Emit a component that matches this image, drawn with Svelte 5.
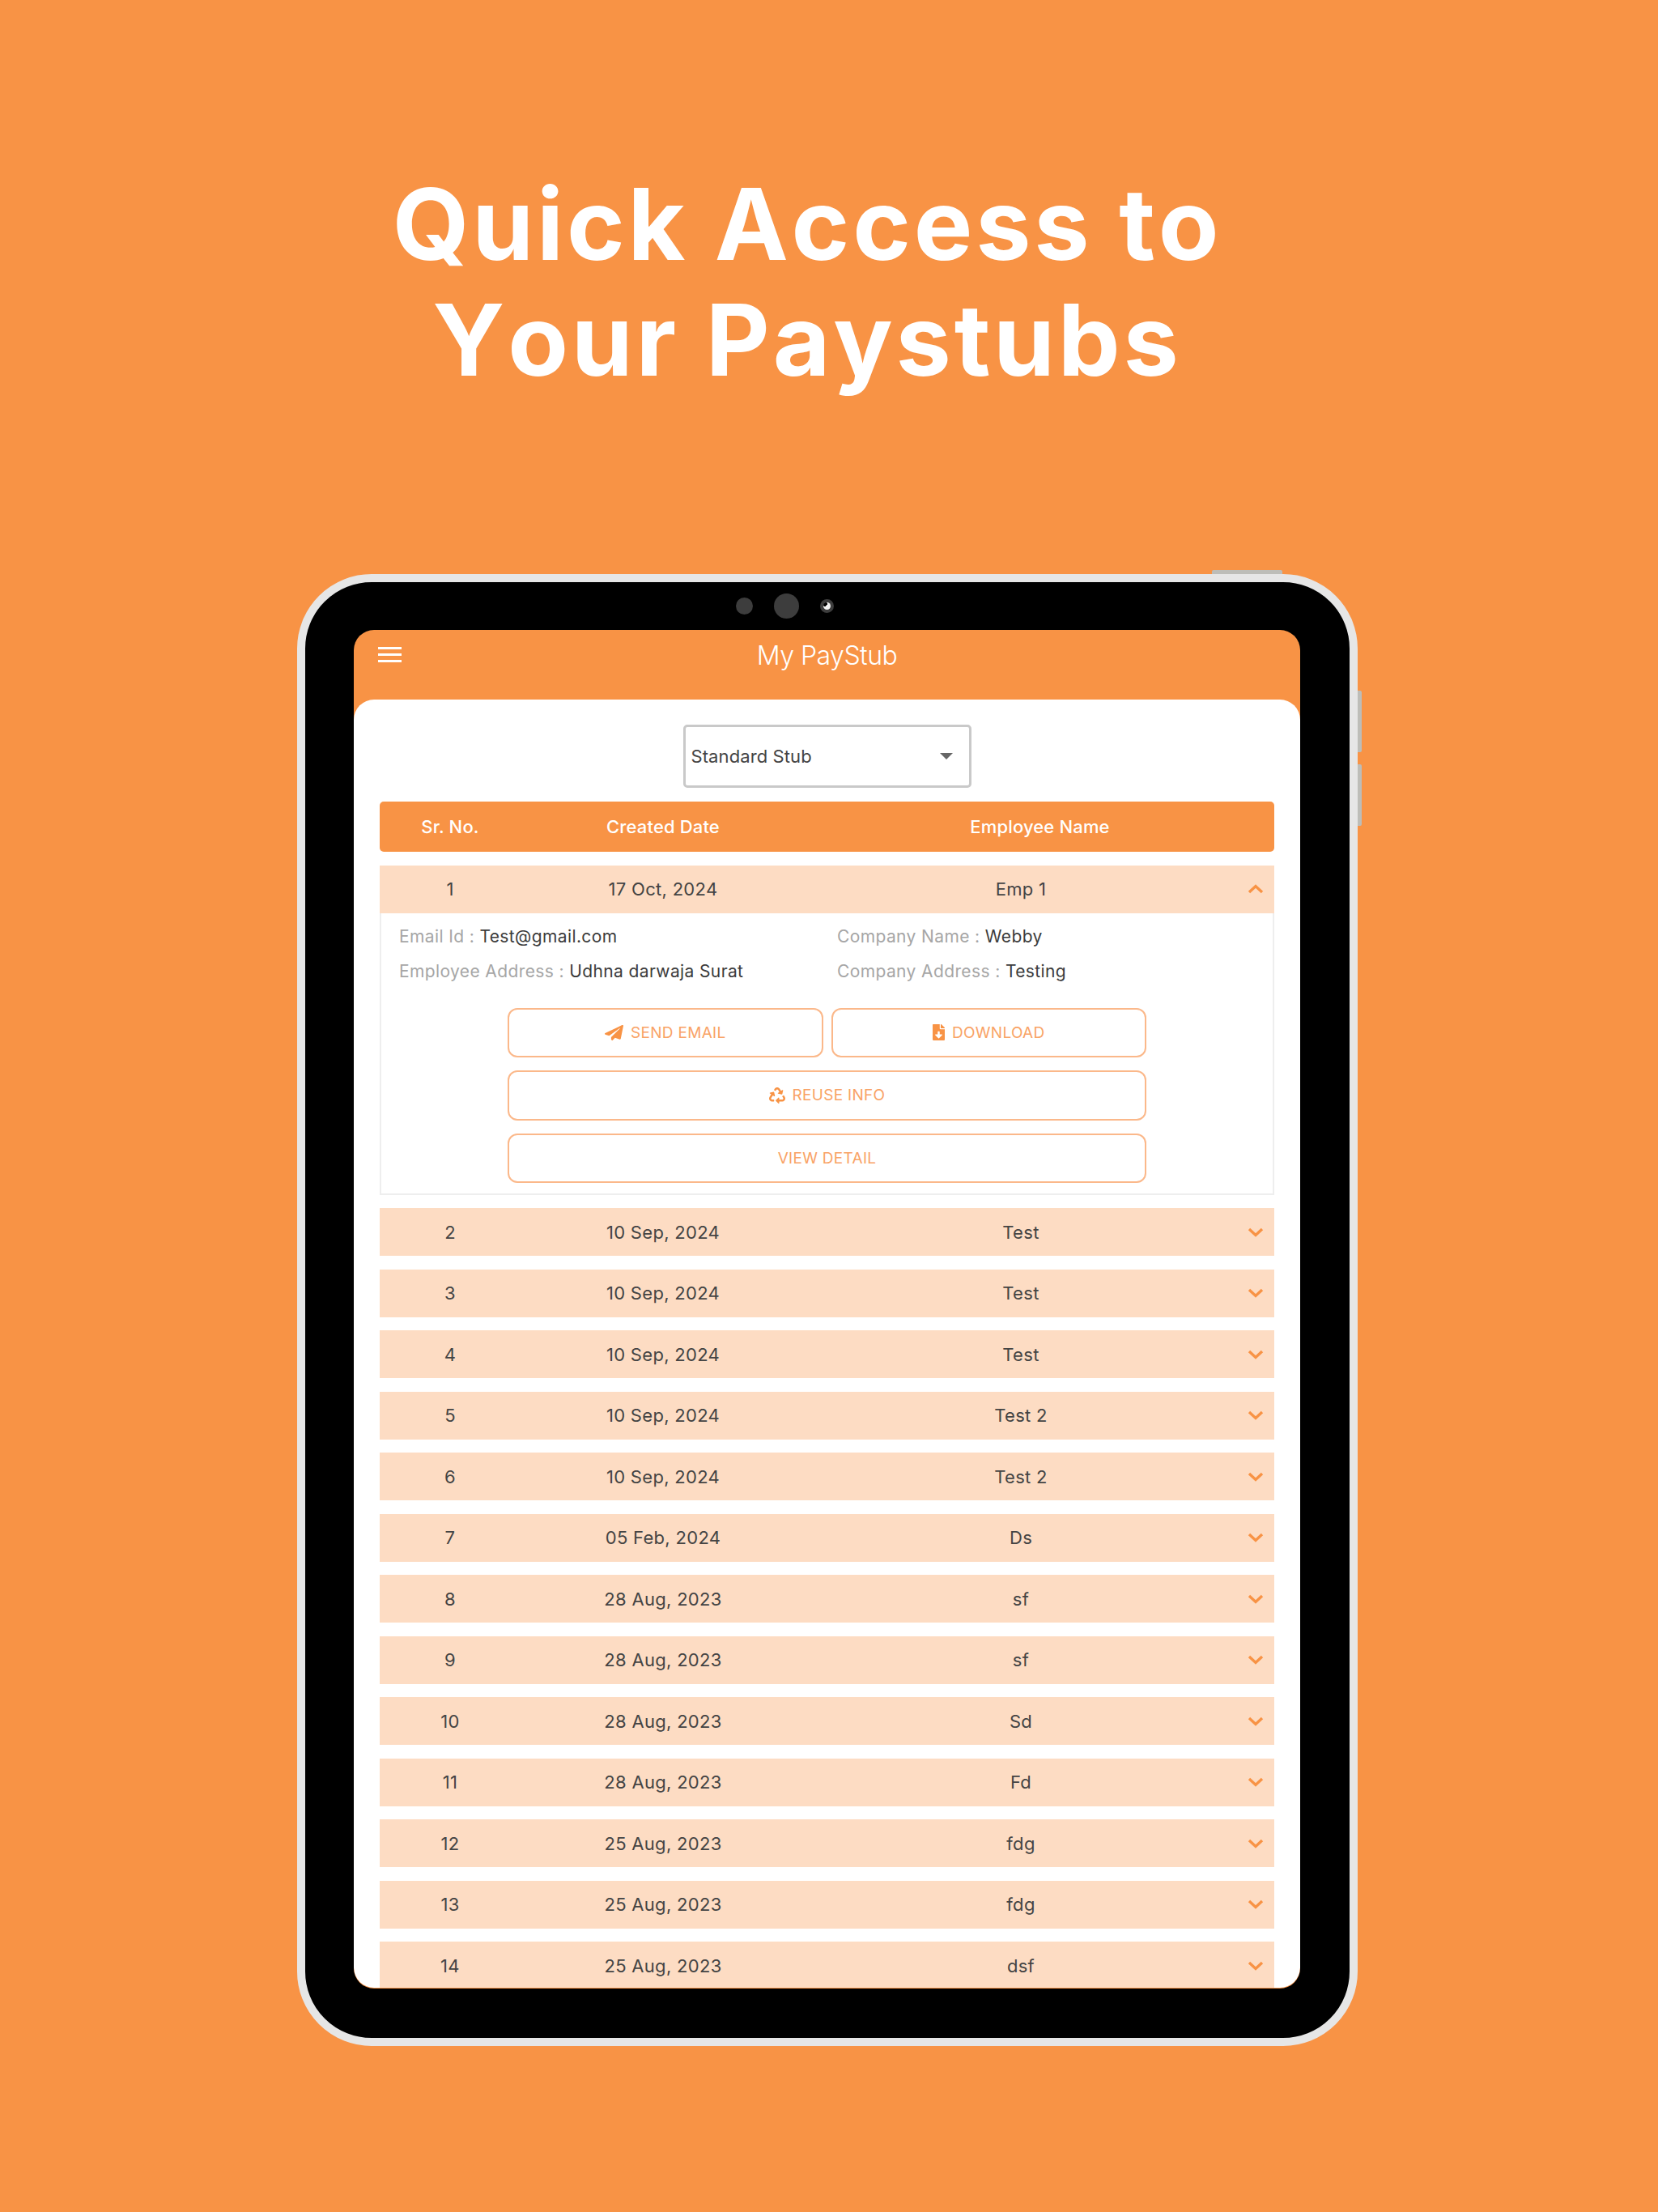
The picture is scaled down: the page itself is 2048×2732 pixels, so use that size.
<script>
	const rows = [
		[2, '10 Sep, 2024', 'Test'],
		[3, '10 Sep, 2024', 'Test'],
		[4, '10 Sep, 2024', 'Test'],
		[5, '10 Sep, 2024', 'Test 2'],
		[6, '10 Sep, 2024', 'Test 2'],
		[7, '05 Feb, 2024', 'Ds'],
		[8, '28 Aug, 2023', 'sf'],
		[9, '28 Aug, 2023', 'sf'],
		[10, '28 Aug, 2023', 'Sd'],
		[11, '28 Aug, 2023', 'Fd'],
		[12, '25 Aug, 2023', 'fdg'],
		[13, '25 Aug, 2023', 'fdg'],
		[14, '25 Aug, 2023', 'dsf']
	];
</script>

<div class="page">
	<h1 class="hero">Quick Access to<br />Your Paystubs</h1>

	<div class="device">
		<span class="btn-top"></span>
		<span class="btn-side one"></span>
		<span class="btn-side two"></span>
		<div class="cams">
			<span class="cam small"></span>
			<span class="cam big"></span>
			<span class="cam lens"><i></i></span>
		</div>

		<div class="screen">
			<header class="appbar">
				<div class="burger"><span></span><span></span><span></span></div>
				<div class="apptitle">My PayStub</div>
			</header>

			<main class="panel">
				<div class="select">
					<span>Standard Stub</span>
					<span class="caret"></span>
				</div>

				<div class="table">
					<div class="head">
						<div>Sr. No.</div>
						<div>Created Date</div>
						<div>Employee Name</div>
					</div>

					<div class="item">
						<div class="row">
							<div>1</div>
							<div>17 Oct, 2024</div>
							<div>Emp 1</div>
							<svg class="chev" viewBox="0 0 20 12"><path d="M2 10 L10 2.5 L18 10" /></svg>
						</div>
						<div class="detail">
							<div class="info">
								<p><b>Email Id :</b> Test@gmail.com</p>
								<p><b>Company Name :</b> Webby</p>
								<p><b>Employee Address :</b> Udhna darwaja Surat</p>
								<p><b>Company Address :</b> Testing</p>
							</div>
							<div class="actions">
								<button>
									<svg class="ico plane" viewBox="0 0 512 512" preserveAspectRatio="none"><path d="M476 3.2L12.5 270.6c-18.1 10.4-15.8 35.6 2.2 43.2L121 358.4l287.3-253.2c5.5-4.9 13.3 2.6 8.6 8.3L176 407v80.5c0 23.6 28.5 32.9 42.5 15.8L282 426l124.6 52.2c14.2 6 30.4-2.9 33-18.2l72-432C515 7.8 493.3-6.8 476 3.2z" /></svg>
									SEND EMAIL
								</button>
								<button>
									<svg class="ico file" viewBox="0 0 384 512"><path d="M224 136V0H24C10.7 0 0 10.7 0 24v464c0 13.3 10.7 24 24 24h336c13.3 0 24-10.7 24-24V160H248c-13.2 0-24-10.8-24-24zm76.45 211.36l-96.42 95.7c-6.65 6.61-17.39 6.61-24.04 0l-96.42-95.7C73.42 337.29 80.54 320 94.82 320H160v-80c0-8.84 7.16-16 16-16h32c8.84 0 16 7.16 16 16v80h65.18c14.28 0 21.4 17.29 11.27 27.36zM377 105L279.1 7c-4.5-4.5-10.6-7-17-7H256v128h128v-6.1c0-6.3-2.5-12.4-7-16.9z" /></svg>
									DOWNLOAD
								</button>
								<button class="wide">
									<svg class="ico recycle" viewBox="0 0 512 512"><path d="M184.561 261.903c3.232 13.997-12.123 24.635-24.068 17.168l-40.736-25.455-50.867 81.402C55.606 356.273 70.96 384 96.012 384H148c6.627 0 12 5.373 12 12v40c0 6.627-5.373 12-12 12H96.115c-75.334 0-121.302-83.048-81.408-146.88l50.822-81.388-40.725-25.448c-12.081-7.547-8.966-25.961 4.879-29.158l110.237-25.45c8.611-1.988 17.201 3.381 19.189 11.99l25.452 110.237zm98.561-182.915l41.289 66.076-40.74 25.457c-12.051 7.528-9 25.953 4.879 29.158l110.237 25.45c8.672 1.999 17.215-3.438 19.189-11.99l25.45-110.237c3.197-13.845-11.926-24.767-24.068-17.168l-40.687 25.424-41.263-66.082c-37.521-60.033-125.209-60.171-162.816 0l-17.963 28.766c-3.51 5.62-1.8 13.021 3.82 16.533l33.919 21.195c5.62 3.512 13.024 1.803 16.536-3.817l17.961-28.743c12.712-20.341 41.973-19.676 54.257-.022zM497.288 301.12l-27.515-44.065c-3.511-5.623-10.916-7.334-16.538-3.821l-33.861 21.159c-5.62 3.512-7.33 10.915-3.818 16.536l27.564 44.112c13.257 21.211-2.057 48.96-27.136 48.96H320V336.02c0-14.213-17.242-21.383-27.313-11.313l-80 79.981c-6.249 6.248-6.249 16.379 0 22.627l80 79.989C302.689 517.308 320 510.3 320 495.989V448h95.88c75.274 0 121.335-82.997 81.408-146.88z" /></svg>
									REUSE INFO
								</button>
								<button class="wide">VIEW DETAIL</button>
							</div>
						</div>
					</div>

					{#each rows as [no, date, name]}
						<div class="row">
							<div>{no}</div>
							<div>{date}</div>
							<div>{name}</div>
							<svg class="chev" viewBox="0 0 20 12"><path d="M2 2 L10 9.5 L18 2" /></svg>
						</div>
					{/each}
				</div>
			</main>
		</div>
	</div>
</div>

<style>
	:global(body) {
		margin: 0;
		background: #f89345;
	}

	.page {
		width: 2048px;
		height: 2732px;
		padding-top: 205px;
		box-sizing: border-box;
		overflow: hidden;
		background: #f89345;
		font-family: Inter, 'Liberation Sans', sans-serif;
	}

	.hero {
		width: 1994px;
		margin: 0 0 218px;
		color: #fff;
		font-size: 122px;
		font-weight: 700;
		line-height: 143px;
		letter-spacing: 3.8px;
		font-kerning: none;
		text-align: center;
	}

	.device {
		position: relative;
		width: 1310px;
		height: 1818px;
		margin-left: 367px;
		padding: 59px 61px 61px 60px;
		box-sizing: border-box;
		background: #000;
		border: 10px solid #e6e6e6;
		border-radius: 92px;
	}

	.btn-top {
		position: absolute;
		top: -15px;
		left: 1120px;
		width: 87px;
		height: 5px;
		background: #bdbdb8;
		border-radius: 2px 2px 0 0;
	}

	.btn-side {
		position: absolute;
		right: -15px;
		width: 5px;
		background: #bdbdb8;
		border-radius: 0 2px 2px 0;
	}

	.btn-side.one {
		top: 134px;
		height: 76px;
	}

	.btn-side.two {
		top: 225px;
		height: 76px;
	}

	.cams {
		position: absolute;
		top: 14px;
		left: 532px;
		display: flex;
		align-items: center;
		gap: 26px;
		height: 31px;
	}

	.cam {
		display: block;
		border-radius: 50%;
		background: #3d3d3d;
	}

	.cam.small {
		width: 21px;
		height: 21px;
	}

	.cam.big {
		width: 31px;
		height: 31px;
	}

	.cam.lens {
		position: relative;
		width: 17px;
		height: 17px;
	}

	.cam.lens i {
		position: absolute;
		top: 4px;
		left: 4px;
		width: 9px;
		height: 9px;
		border-radius: 50%;
		background: radial-gradient(circle at 20% 20%, #000 0 28%, #f2f2f2 30%);
	}

	.screen {
		height: 100%;
		border-radius: 25px;
		overflow: hidden;
		background: #f89345;
	}

	.appbar {
		position: relative;
		display: flex;
		justify-content: center;
		height: 86px;
		padding-top: 12px;
		box-sizing: border-box;
	}

	.burger {
		position: absolute;
		top: 21px;
		left: 30px;
		display: flex;
		flex-direction: column;
		gap: 5px;
		width: 29px;
	}

	.burger span {
		height: 3px;
		background: #fff;
	}

	.apptitle {
		color: #fff;
		font-size: 32px;
		font-weight: 300;
		line-height: 40px;
		letter-spacing: -0.5px;
	}

	.panel {
		height: 1591px;
		padding: 31px 32px 0 32px;
		box-sizing: border-box;
		overflow: hidden;
		background: #fff;
		border-radius: 25px;
	}

	.select {
		display: flex;
		align-items: center;
		justify-content: space-between;
		width: 356px;
		height: 78px;
		margin: 0 auto 17px;
		padding: 0 20px 0 7px;
		box-sizing: border-box;
		border: 3px solid #c9c9c9;
		border-radius: 5px;
		color: #444;
		font-size: 22px;
		letter-spacing: 0.1px;
	}

	.caret {
		width: 0;
		height: 0;
		border-left: 8px solid transparent;
		border-right: 8px solid transparent;
		border-top: 8px solid #666;
	}

	.table {
		display: flex;
		flex-direction: column;
		gap: 16.5px;
		color: #444;
		font-size: 22px;
		letter-spacing: 0.3px;
	}

	.head,
	.row {
		display: grid;
		align-items: center;
		text-align: center;
	}

	.head {
		grid-template-columns: 174px 352px 1fr;
		height: 62px;
		background: #f89345;
		border-radius: 5px;
		color: #fff;
		font-weight: 500;
		letter-spacing: 0.15px;
	}

	.row {
		grid-template-columns: 174px 352px 532px 47px;
		flex: none;
		height: 59px;
		background: #fddcc3;
	}

	.chev {
		width: 20px;
		height: 12px;
		justify-self: center;
	}

	.chev path {
		fill: none;
		stroke: #f89345;
		stroke-width: 3.4;
	}

	.detail {
		height: 348px;
		padding: 0 22px;
		box-sizing: border-box;
		border: 2px solid #eee;
		border-top: 0;
	}

	.info {
		display: grid;
		grid-template-columns: 541px 1fr;
		row-gap: 17px;
		padding-top: 16px;
	}

	.info p {
		margin: 0;
		line-height: 26px;
		font-size: 21px;
		letter-spacing: 0.38px;
		color: #3c3c3c;
	}

	.info b {
		font-weight: 400;
		color: #a6a6a6;
	}

	.actions {
		display: grid;
		grid-template-columns: 1fr 1fr;
		gap: 16px 10px;
		width: 789px;
		margin: 32px 0 0 134px;
	}

	button {
		display: flex;
		align-items: center;
		justify-content: center;
		gap: 9px;
		height: 61.5px;
		padding: 0;
		background: #fff;
		border: 2px solid #fbb88a;
		border-radius: 12px;
		color: #f9a366;
		font-family: inherit;
		font-size: 19px;
		letter-spacing: 0.3px;
	}

	button.wide {
		grid-column: 1 / 3;
	}

	.ico {
		flex: none;
		fill: #f89345;
	}

	.ico.plane {
		width: 23px;
		height: 19px;
	}

	.ico.file {
		width: 15px;
		height: 20px;
	}

	.ico.recycle {
		width: 20px;
		height: 20px;
	}
</style>
